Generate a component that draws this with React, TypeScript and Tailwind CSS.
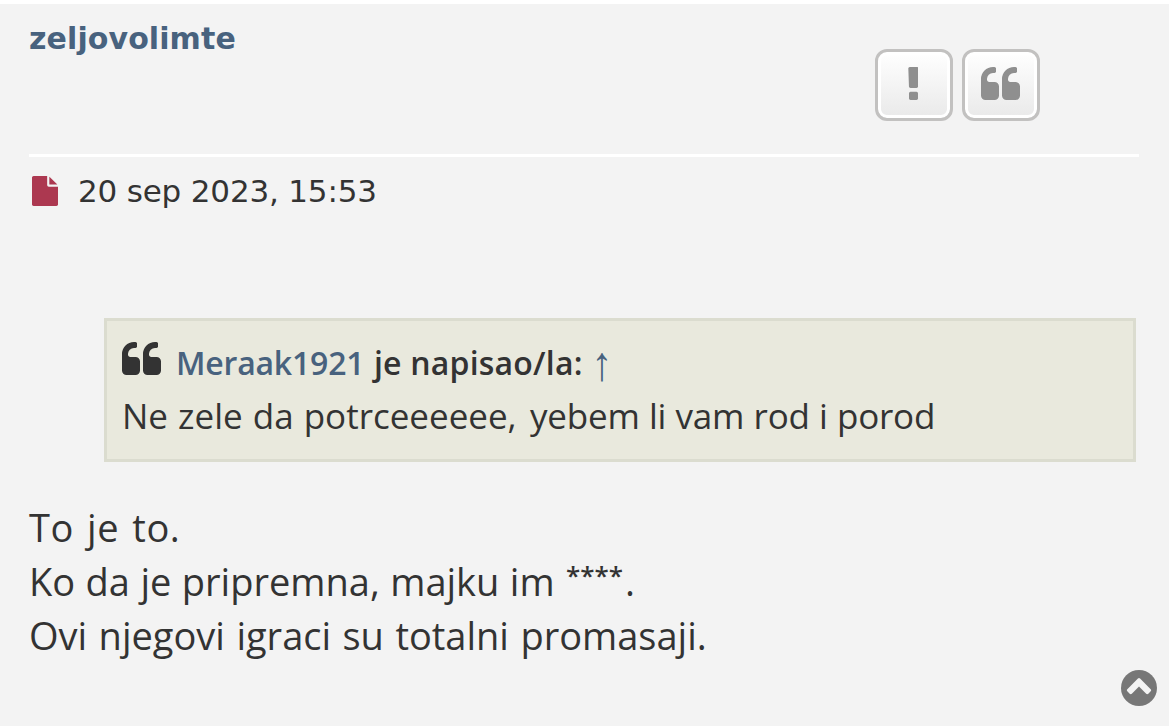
import type { ReactNode } from "react";

const QUOTE =
  "M832 960v384q0 80-56 136t-136 56h-384q-80 0-136-56t-56-136v-704q0-104 40.5-198.5t109.5-163.5 163.5-109.5 198.5-40.5h64q26 0 45 19t19 45v128q0 26-19 45t-45 19h-64q-106 0-181 75t-75 181v32q0 40 28 68t68 28h224q80 0 136 56t56 136zm896 0v384q0 80-56 136t-136 56h-384q-80 0-136-56t-56-136v-704q0-104 40.5-198.5t109.5-163.5 163.5-109.5 198.5-40.5h64q26 0 45 19t19 45v128q0 26-19 45t-45 19h-64q-106 0-181 75t-75 181v32q0 40 28 68t68 28h224q80 0 136 56t56 136z";
const EXCLAMATION =
  "M1120 1248v224q0 26-19 45t-45 19h-256q-26 0-45-19t-19-45v-224q0-26 19-45t45-19h256q26 0 45 19t19 45zm30-1056l-28 768q-1 26-20.5 45t-45.5 19h-256q-26 0-45.5-19t-20.5-45l-28-768q-1-26 17.5-45t44.5-19h320q26 0 44.5 19t17.5 45z";
const FILE =
  "M1152 512v-472q22 14 36 28l408 408q14 14 28 36h-472zm-128 32q0 40 28 68t68 28h544v1056q0 40-28 68t-68 28h-1344q-40 0-68-28t-28-68v-1600q0-40 28-68t68-28h800v544z";
const CHEVRON =
  "M1293 1139l102-102q19-19 19-45t-19-45l-454-454q-19-19-45-19t-45 19l-454 454q-19 19-19 45t19 45l102 102q19 19 45 19t45-19l307-307 307 307q19 19 45 19t45-19z";

type IconProps = { path: string; viewBox: string; className: string };

function Icon({ path, viewBox, className }: IconProps) {
  return (
    <svg viewBox={viewBox} className={className} fill="currentColor" preserveAspectRatio="none" aria-hidden="true">
      <path d={path} />
    </svg>
  );
}

function PostButton({ label, children }: { label: string; children: ReactNode }) {
  return (
    <button
      aria-label={label}
      className="flex h-[72px] w-[78px] justify-center rounded-[12px] border-3 border-[#c2c1c0] bg-linear-to-b from-white to-[#e9e9e9] pt-[15px] pr-[2px] text-[#8f8f8f] shadow-[inset_0_0_0_3px_#ffffff]"
    >
      {children}
    </button>
  );
}

export default function App() {
  return (
    <div className="h-[726px] overflow-hidden border-t-4 border-white bg-[#f3f3f3] pl-[29px] text-[#333333]">
      <header className="flex h-[153px] w-[1110px] justify-between border-b-3 border-white pr-[99px]">
        <a className="mt-[17px] font-['DejaVu_Sans'] text-[30px] leading-[36px] font-bold tracking-[0.1px] text-[#48627e]">
          zeljovolimte
        </a>
        <div className="mt-[45px] flex gap-[9px]">
          <PostButton label="Prijavi">
            <Icon path={EXCLAMATION} viewBox="650 128 492 1408" className="mr-px h-[33px] w-[11.5px]" />
          </PostButton>
          <PostButton label="Citiraj">
            <Icon path={QUOTE} viewBox="64 128 1664 1408" className="h-[33px] w-[39px]" />
          </PostButton>
        </div>
      </header>

      <p className="mt-[16px] flex h-[36px] font-['DejaVu_Sans'] text-[31px] leading-[36px]">
        <Icon path={FILE} viewBox="128 0 1536 1792" className="mt-[3px] mr-[20px] ml-[3px] h-[30px] w-[26px] text-[#ac3850]" />
        <span className="tracking-[-0.18px]">20 sep 2023, 15:53</span>
      </p>

      <blockquote className="mt-[109px] ml-[75px] h-[144px] w-[1032px] border-3 border-[#dbdccf] bg-[#e9e9dd] pl-[15px] font-['Open_Sans']">
        <cite className="mt-[18px] flex h-[48px] text-[32px] leading-[48px] font-semibold not-italic whitespace-pre">
          <Icon path={QUOTE} viewBox="64 128 1664 1408" className="mt-[3px] mr-[15px] h-[33px] w-[39px]" />
          <a className="w-[198px] tracking-[-0.2px] text-[#48627e]">Meraak1921</a>
          <span className="w-[220px] tracking-[0.2px]">je napisao/la:</span>
          <a className="inline-block scale-x-130 scale-y-150 font-['Liberation_Sans'] text-[32px] font-normal text-[#48627e]">↑</a>
        </cite>
        <p className="mt-[5px] flex text-[35px] leading-[48px] whitespace-pre">
          <span className="w-[408px] [word-spacing:1px]">Ne zele da potrceeeeee,</span>
          <span className="tracking-[-0.2px] [word-spacing:0.4px]">yebem li vam rod i porod</span>
        </p>
      </blockquote>

      <div className="mt-[38px] font-['Open_Sans'] text-[38px] leading-[54px] whitespace-pre">
        <p className="tracking-[0.6px] [word-spacing:2.6px]">To je to.</p>
        <p className="flex">
          <span className="w-[537px] [word-spacing:0.6px]">Ko da je pripremna, majku im</span>
          <span className="-mt-[6px] w-[59px] text-[26px] font-semibold">****</span>
          <span>.</span>
        </p>
        <p className="[word-spacing:1.6px]">Ovi njegovi igraci su totalni promasaji.</p>
      </div>

      <a
        aria-label="Vrh"
        className="fixed right-[12px] bottom-[20px] flex h-[36px] w-[36px] items-center justify-center rounded-full bg-[#777777] text-[#f3f3f3]"
      >
        <Icon path={CHEVRON} viewBox="128 128 1536 1536" className="h-[36px] w-[36px]" />
      </a>
    </div>
  );
}
